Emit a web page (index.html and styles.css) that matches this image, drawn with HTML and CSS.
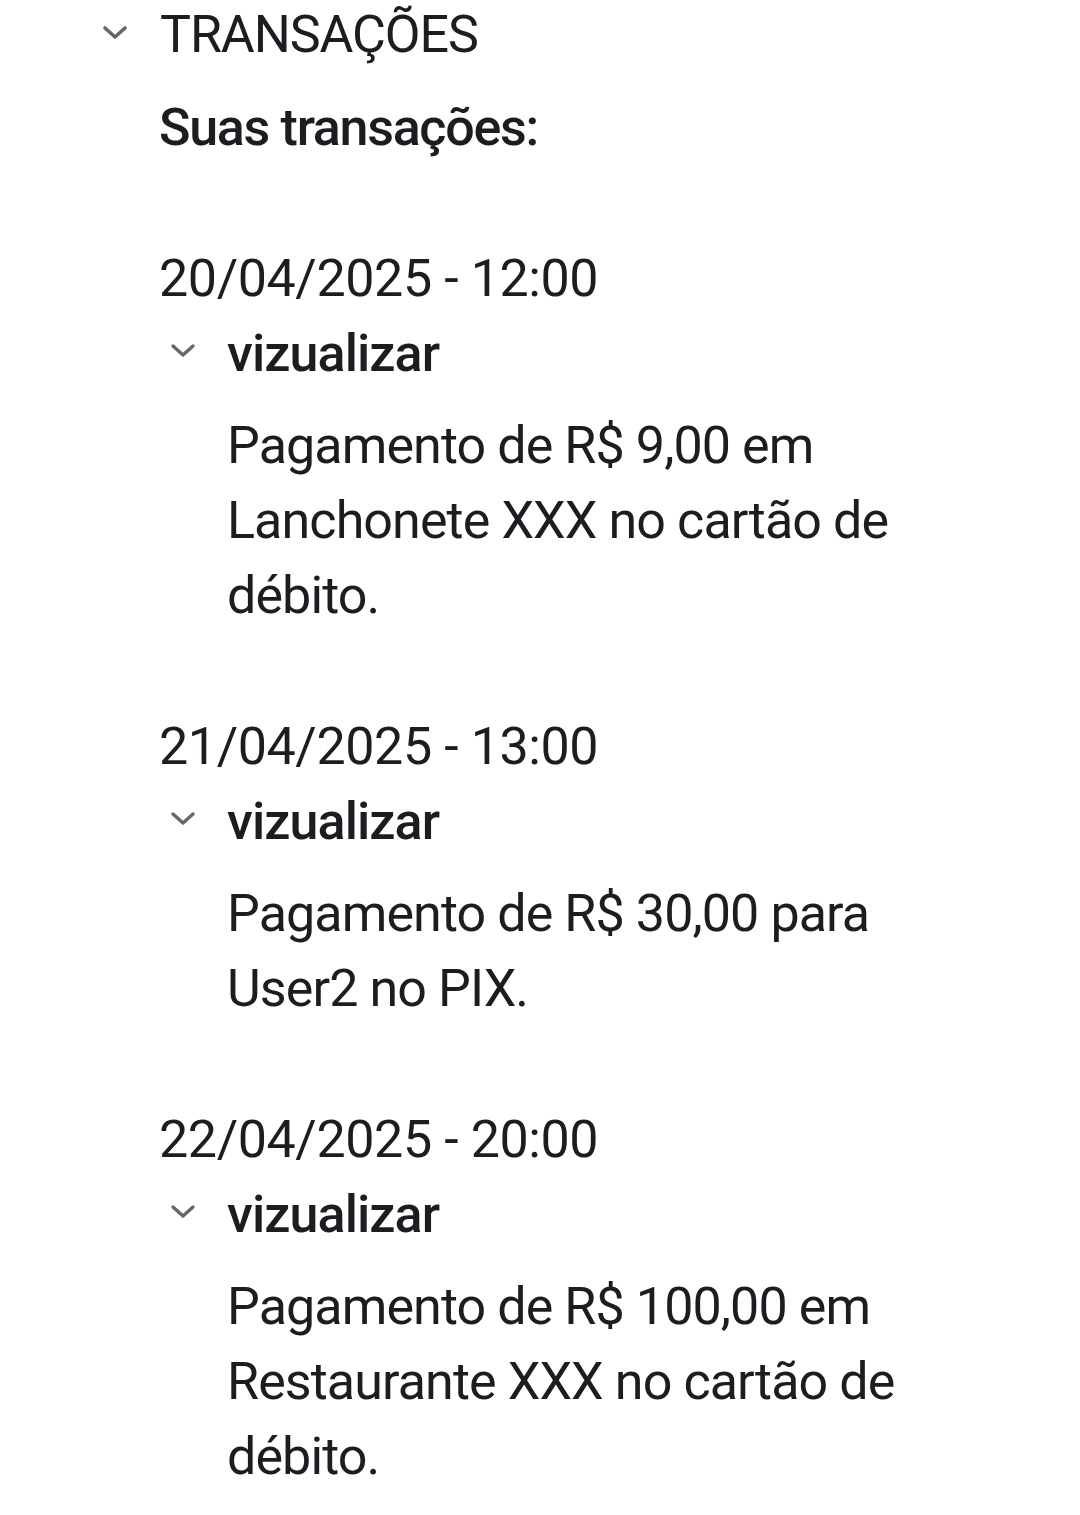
FILE: index.html
```html
<!DOCTYPE html>
<html lang="pt-BR">
<head>
<meta charset="utf-8">
<link rel="stylesheet" href="styles.css">
</head>
<body>
<div class="page">
  <div class="section-head">
    <svg class="chev chev-big" viewBox="0 0 26 15" width="26" height="15"><path d="M3 3 L13 12 L23 3" fill="none" stroke="#656769" stroke-width="3.6" stroke-linecap="round" stroke-linejoin="round"/></svg>
    <span class="section-title">TRANSAÇÕES</span>
  </div>
  <div class="section-body">
    <div class="intro">Suas transações:</div>

    <div class="tx">
      <div class="tx-date">20/04/2025 - 12:00</div>
      <div class="tx-toggle">
        <svg class="chev" viewBox="0 0 26 15" width="26" height="15"><path d="M3 3 L13 12 L23 3" fill="none" stroke="#656769" stroke-width="3.4" stroke-linecap="round" stroke-linejoin="round"/></svg>
        <span class="tx-label">vizualizar</span>
      </div>
      <p class="tx-desc">Pagamento de R$ 9,00 em Lanchonete XXX no cartão de débito.</p>
    </div>

    <div class="tx">
      <div class="tx-date">21/04/2025 - 13:00</div>
      <div class="tx-toggle">
        <svg class="chev" viewBox="0 0 26 15" width="26" height="15"><path d="M3 3 L13 12 L23 3" fill="none" stroke="#656769" stroke-width="3.4" stroke-linecap="round" stroke-linejoin="round"/></svg>
        <span class="tx-label">vizualizar</span>
      </div>
      <p class="tx-desc">Pagamento de R$ 30,00 para User2 no PIX.</p>
    </div>

    <div class="tx">
      <div class="tx-date">22/04/2025 - 20:00</div>
      <div class="tx-toggle">
        <svg class="chev" viewBox="0 0 26 15" width="26" height="15"><path d="M3 3 L13 12 L23 3" fill="none" stroke="#656769" stroke-width="3.4" stroke-linecap="round" stroke-linejoin="round"/></svg>
        <span class="tx-label">vizualizar</span>
      </div>
      <p class="tx-desc">Pagamento de R$ 100,00 em Restaurante XXX no cartão de débito.</p>
    </div>
  </div>
</div>
</body>
</html>
```

FILE: styles.css
```css
html, body {
  margin: 0;
  padding: 0;
  background: #ffffff;
}
body {
  font-family: Roboto, "Noto Sans", sans-serif;
  color: #1b1d20;
  font-size: 52px;
  line-height: 75px;
  letter-spacing: -0.9px;
}
.page {
  padding-left: 102px;
}
.section-head {
  display: flex;
  align-items: center;
  height: 72px;
  margin-top: -2px;
}
.chev-big {
  margin-right: 32px;
  margin-top: -4px;
}
.section-title {
  font-weight: 400;
  letter-spacing: -1.1px;
}
.section-body {
  padding-left: 57px;
  padding-top: 20px;
}
.intro {
  font-weight: 500;
  letter-spacing: -1.3px;
  margin-bottom: 76px;
}
.tx {
  margin-bottom: 76px;
}
.tx-date {
  letter-spacing: -0.4px;
}
.tx-toggle {
  display: flex;
  align-items: center;
  margin-left: 11px;
}
.tx-toggle .chev {
  margin-right: 31px;
  margin-top: -6px;
}
.tx-label {
  font-weight: 500;
}
.tx-desc {
  margin: 17px 0 0 68px;
  width: 710px;
}
```
